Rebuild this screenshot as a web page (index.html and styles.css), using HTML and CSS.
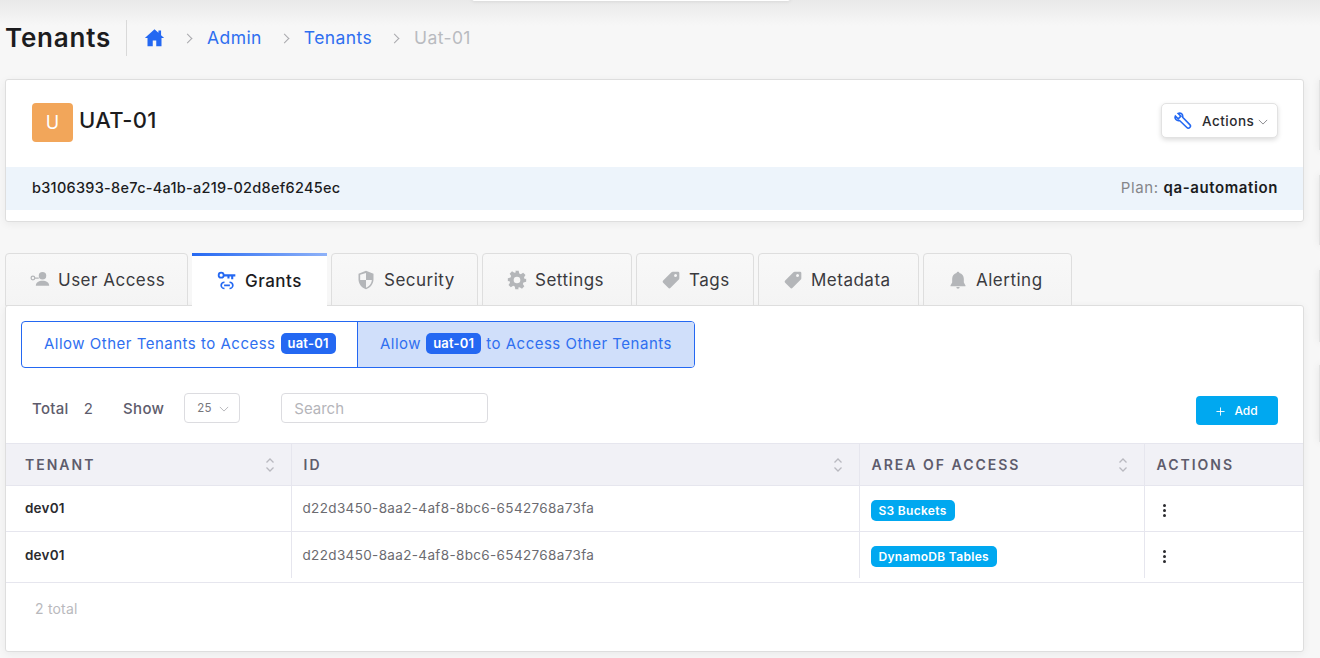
FILE: index.html
```html
<!DOCTYPE html>
<html lang="en">
<head>
<meta charset="UTF-8">
<title>Tenants</title>
<link rel="stylesheet" href="styles.css">
</head>
<body>
<div class="topnotch"></div>
<!-- edge of the panels that sit off screen -->
<div class="rail">
  <div class="rail-item r1"></div>
  <div class="rail-item r2"></div>
  <div class="rail-item r3"></div>
  <div class="rail-item r4"></div>
</div>
<header class="crumbbar">
  <h1 class="pagetitle">Tenants</h1>
  <nav class="crumbs">
    <svg class="homeicon" viewBox="0 0 24 24"><path d="M12 2.5 1 12.6h3V22h6v-6.5h4V22h6v-9.4h3L19.5 9.4V4h-3v2.7z"/></svg>
    <span class="sep"></span><a class="crumb">Admin</a>
    <span class="sep"></span><a class="crumb">Tenants</a>
    <span class="sep"></span><span class="crumb current">Uat-01</span>
  </nav>
</header>

<section class="card summary">
  <div class="summary-top">
    <div class="avatar">U</div>
    <h2 class="tenantname">UAT-01</h2>
    <button class="actionsbtn">
      <svg class="wrench" viewBox="0 0 24 24"><path d="M3 6.500 6.500 10 10 6.500 6.500 3C9.500 1.500 13 4 12.200 8l9 9.200a2.600 2.600 0 0 1-3.700 3.700L8.300 12C4.500 12.800 1.500 9.500 3 6.500z"/></svg>
      <span>Actions</span>
      <svg class="chev" viewBox="0 0 12 7"><path d="M1 1l5 5 5-5"/></svg>
    </button>
  </div>
  <div class="summary-info">
    <span class="uuid">b3106393-8e7c-4a1b-a219-02d8ef6245ec</span>
    <span class="plan">Plan: <b>qa-automation</b></span>
  </div>
</section>

<ul class="tabs">
  <li class="tab">
    <svg class="tabicon" viewBox="0 0 24 24"><circle cx="15" cy="7" r="4.500"/><path d="M7 19c0-4 3.500-6 8-6s8 2 8 6z"/><circle cx="3.500" cy="9.500" r="2.200" fill="none" stroke="#b4b6b9" stroke-width="1.500"/><path d="M5.500 9h5v1.500h-5z"/></svg>
    User Access</li>
  <li class="tab active">
    <svg class="tabicon" viewBox="0 0 24 24"><circle cx="5" cy="5" r="3" fill="none" stroke="#2468f2" stroke-width="2.200"/><path d="M8 4h14v2.500h-2.500V10h-2.500V6.500h-2V9h-2.500V6.500H8z"/><path d="M9 13.500a4 4 0 0 0-4 3.500 4 4 0 0 0 4 4M15 13.500a4 4 0 0 1 4 3.500 4 4 0 0 1-4 4M8.500 17.300h7" fill="none" stroke="#2468f2" stroke-width="2"/></svg>
    Grants</li>
  <li class="tab">
    <svg class="tabicon" viewBox="0 0 24 24"><path d="M12 1 3 4.500V11c0 5.500 3.800 10.300 9 12 5.200-1.700 9-6.500 9-12V4.500zM12 3.500V12H5V5.800zM12 12h7c-.3 4.300-3.300 7.900-7 9.300z" fill-rule="evenodd"/></svg>
    Security</li>
  <li class="tab">
    <svg class="tabicon" viewBox="0 0 24 24"><path fill-rule="evenodd" d="M10 1h4l.7 3.200 1.900.8 2.800-1.800 2.800 2.800-1.800 2.800.8 1.900L23 10.400v3.800l-3.200.7-.8 1.900 1.800 2.800-2.800 2.800-2.800-1.800-1.900.8L14 23h-4l-.7-3.200-1.900-.8-2.800 1.800-2.800-2.800 1.800-2.800-.8-1.900L1 13.600v-3.800l3.200-.7.8-1.900L3.200 4.400 6 1.600l2.800 1.800 1.900-.8zM12 8a4 4 0 1 0 0 8 4 4 0 0 0 0-8z"/></svg>
    Settings</li>
  <li class="tab">
    <svg class="tabicon" viewBox="0 0 24 24"><path fill-rule="evenodd" d="M14 2h6.500A1.500 1.500 0 0 1 22 3.500V10c0 .6-.2 1.100-.6 1.500L11.500 21.400a2 2 0 0 1-2.800 0L2.600 15.300a2 2 0 0 1 0-2.800L12.500 2.600c.4-.4.900-.6 1.500-.6zM17.500 4.800a1.800 1.800 0 1 0 0 3.600 1.800 1.800 0 0 0 0-3.600z"/></svg>
    Tags</li>
  <li class="tab">
    <svg class="tabicon" viewBox="0 0 24 24"><path fill-rule="evenodd" d="M14 2h6.500A1.500 1.500 0 0 1 22 3.500V10c0 .6-.2 1.100-.6 1.500L11.500 21.400a2 2 0 0 1-2.800 0L2.600 15.300a2 2 0 0 1 0-2.800L12.500 2.600c.4-.4.900-.6 1.500-.6zM17.500 4.800a1.800 1.800 0 1 0 0 3.600 1.800 1.800 0 0 0 0-3.600z"/></svg>
    Metadata</li>
  <li class="tab">
    <svg class="tabicon" viewBox="0 0 24 24"><path d="M12 2c1 0 1.700.7 1.700 1.600C16.800 4.400 19 7 19 10.500V15l2 3.500v1H3v-1L5 15v-4.500c0-3.500 2.200-6.100 5.300-6.900C10.300 2.700 11 2 12 2zM10 20.500h4a2 2 0 0 1-4 0z"/></svg>
    Alerting</li>
</ul>

<section class="card grants">
  <div class="toggle">
    <div class="toggle-item">Allow Other Tenants to Access <span class="pill">uat-01</span></div>
    <div class="toggle-item on">Allow <span class="pill">uat-01</span> to Access Other Tenants</div>
  </div>

  <div class="toolbar">
    <span class="lbl">Total</span><span class="count">2</span>
    <span class="lbl show">Show</span>
    <div class="pagesize">25 <svg class="chev" viewBox="0 0 12 7"><path d="M1 1l5 5 5-5"/></svg></div>
    <input class="search" placeholder="Search">
    <button class="addbtn"><svg class="plus" viewBox="0 0 10 10"><path d="M5 .5v9M.5 5h9"/></svg>Add</button>
  </div>

  <div class="gridwrap">
  <table class="grid">
    <thead>
      <tr>
        <th class="c1">TENANT<svg class="sort" viewBox="0 0 10 16"><path d="M1.500 5.500 5 2l3.500 3.500M1.500 10.500 5 14l3.500-3.500"/></svg></th>
        <th class="c2">ID<svg class="sort" viewBox="0 0 10 16"><path d="M1.500 5.500 5 2l3.500 3.500M1.500 10.500 5 14l3.500-3.500"/></svg></th>
        <th class="c3">AREA OF ACCESS<svg class="sort" viewBox="0 0 10 16"><path d="M1.500 5.500 5 2l3.500 3.500M1.500 10.500 5 14l3.500-3.500"/></svg></th>
        <th class="c4">ACTIONS</th>
      </tr>
    </thead>
    <tbody>
      <tr>
        <td class="name">dev01</td>
        <td class="gid">d22d3450-8aa2-4af8-8bc6-6542768a73fa</td>
        <td class="chipcell"><span class="area">S3 Buckets</span></td>
        <td class="chipcell"><span class="dots"><i></i><i></i><i></i></span></td>
      </tr>
      <tr class="last">
        <td class="name">dev01</td>
        <td class="gid">d22d3450-8aa2-4af8-8bc6-6542768a73fa</td>
        <td class="chipcell"><span class="area">DynamoDB Tables</span></td>
        <td class="chipcell"><span class="dots"><i></i><i></i><i></i></span></td>
      </tr>
    </tbody>
  </table>
  </div>
  <div class="tablefoot">2 total</div>
</section>
</body>
</html>
```
FILE: styles.css
```css
/*base*/
*{
  margin:0;
  padding:0;
  box-sizing:border-box;
  list-style:none;
}
html,body{
  height:658px;
  overflow:hidden;
}
body{
  background:#f7f7f7 linear-gradient(#e9e9e9,#f7f7f7 26px) no-repeat;
  padding:0 16px 0 5px;
  font-family:Inter,"Liberation Sans",sans-serif;
  color:#1c1c1e;
  position:relative;
}
.topnotch{
  position:absolute;
  top:-4px;
  left:472px;
  width:318px;
  height:5px;
  background:#fff;
  border-radius:4px;
  box-shadow:0 0 4px rgba(0,0,0,.12);
}
.rail-item{
  position:absolute;
  left:1319px;
  width:20px;
  background:#f4f4f4;
  border-left:1px solid #e2e2e2;
  box-shadow:0 0 8px rgba(0,0,0,.07);
}
.r1{top:80px;height:70px;}
.r2{top:175px;height:70px;}
.r3{top:270px;height:72px;}
.r4{top:365px;height:77px;}
/*header*/
.crumbbar{
  height:79px;
  display:flex;
  align-items:center;
  padding-bottom:4px;
}
.pagetitle{
  font-size:26px;
  font-weight:600;
  letter-spacing:.8px;
  padding-right:15px;
  border-right:1px solid #d9d9d9;
  line-height:36px;
}
.crumbs{
  display:flex;
  align-items:center;
  margin-left:17px;
  font-size:17.500px;
}
.homeicon{
  width:21px;
  height:21px;
  fill:#2468f2;
}
.sep{
  width:7px;
  height:7px;
  border-top:1.500px solid #a9a9ad;
  border-right:1.500px solid #a9a9ad;
  transform:rotate(45deg);
  margin:2px 16px 0 19px;
}
.crumb{
  color:#2f6ff0;
  letter-spacing:.4px;
}
.current{
  color:#b9bbc0;
}
/*cards*/
.card{
  background:#fff;
  border:1px solid #dedede;
  border-radius:3px;
  box-shadow:0 2px 8px rgba(0,0,0,.06);
}
.summary{
  height:143px;
}
.summary-top{
  height:87px;
  display:flex;
  align-items:flex-start;
  padding:23px 25px 0 26px;
}
.avatar{
  width:41px;
  height:39px;
  background:#f2a65a;
  border-radius:4px;
  color:#fff;
  font-size:18px;
  display:flex;
  align-items:center;
  justify-content:center;
}
.tenantname{
  font-size:22px;
  font-weight:500;
  letter-spacing:.3px;
  margin-left:6px;
  line-height:34px;
}
.actionsbtn{
  margin-left:auto;
  width:117px;
  height:35px;
  background:#fff;
  border:1px solid #e2e2e2;
  border-radius:5px;
  box-shadow:0 2px 5px rgba(0,0,0,.14);
  display:flex;
  align-items:center;
  padding-left:11px;
  font:500 13.500px Inter,"Liberation Sans",sans-serif;
  letter-spacing:.5px;
  color:#2b2b2f;
}
.wrench{
  width:19px;
  height:19px;
  fill:none;
  stroke:#2468f2;
  stroke-width:2;
  margin-right:10px;
}
.chev{
  width:10px;
  height:6px;
  fill:none;
  stroke:#8d8d92;
  stroke-width:1.200;
  margin-left:4px;
  margin-top:2px;
}
.summary-info{
  height:43px;
  background:#edf4fb;
  display:flex;
  align-items:center;
  justify-content:space-between;
  padding:0 25px 2px 26px;
  font-size:14.500px;
  font-weight:500;
  letter-spacing:.28px;
}
.plan{
  color:#85868a;
  font-size:15px;
  font-weight:400;
  letter-spacing:.6px;
}
.plan b{
  color:#1c1c1e;
  font-weight:600;
}
/*tabs*/
.tabs{
  display:grid;
  grid-template-columns:183px 135px 147px 150px 118px 161px 149px;
  gap:4px;
  margin-top:31px;
  position:relative;
  z-index:1;
  margin-bottom:-1px;
}
.tab{
  height:53px;
  display:flex;
  align-items:center;
  gap:8px;
  padding-left:24px;
  background:linear-gradient(#f8f8f8,#f4f4f4);
  border:1px solid #dedede;
  border-radius:4px 4px 0 0;
  font-size:17px;
  letter-spacing:.5px;
  color:#3a3a3e;
}
.tabicon{
  width:20px;
  height:20px;
  fill:#b4b6b9;
  flex:none;
}
.active{
  background:#fff;
  border:0;
  border-top:3px solid;
  border-image:linear-gradient(90deg,#2468f2,#8fb2f8) 1;
  padding-left:25px;
  font-weight:500;
  color:#1c1c1e;
}
.active .tabicon{
  fill:#2468f2;
}
/*grants*/
.grants{
  height:347px;
  padding-top:15px;
}
.toggle{
  display:flex;
  width:674px;
  height:47px;
  margin-left:15px;
  border:1px solid #2468f2;
  border-radius:4px;
  overflow:hidden;
  font-size:15px;
  letter-spacing:.5px;
  color:#2f6ff0;
}
.toggle-item{
  display:flex;
  align-items:center;
  gap:5px;
  padding:0 0 3px 22px;
  width:335px;
}
.on{
  flex:1;
  background:#d0dffa;
  border-left:1px solid #2468f2;
}
.pill{
  background:#2468f2;
  color:#fff;
  font-size:13px;
  font-weight:600;
  letter-spacing:.2px;
  padding:2px 7px 3px;
  border-radius:5px;
}
.toolbar{
  display:flex;
  align-items:center;
  height:50px;
  margin-top:15px;
  padding:0 25px 0 26px;
  font-size:15px;
  letter-spacing:.3px;
}
.lbl{
  font-weight:500;
  color:#5e5c6c;
}
.count{
  margin-left:15px;
  color:#5e5c6c;
}
.show{
  margin-left:30px;
}
.pagesize{
  margin-left:20px;
  width:56px;
  height:30px;
  border:1px solid #dcdce0;
  border-radius:4px;
  font-size:11.500px;
  color:#77777c;
  display:flex;
  align-items:center;
  padding-left:12px;
}
.pagesize .chev{
  margin-left:7px;
  stroke:#b9b9bd;
}
.search{
  margin-left:41px;
  width:207px;
  height:30px;
  border:1px solid #dcdce0;
  border-radius:4px;
  padding-left:12px;
  font:15px Inter,"Liberation Sans",sans-serif;
  outline:none;
}
.search::placeholder{
  color:#b5b5ba;
}
.addbtn{
  margin-left:auto;
  margin-top:4px;
  width:82px;
  height:29px;
  background:#00a8f0;
  color:#fff;
  border:0;
  border-radius:4px;
  font:500 12px Inter,"Liberation Sans",sans-serif;
  display:flex;
  align-items:center;
  justify-content:center;
  gap:9px;
}
.plus{
  width:9px;
  height:9px;
  fill:none;
  stroke:#fff;
  stroke-width:1;
  margin-top:2px;
}
/*table*/
.gridwrap{
  margin-top:10px;
  padding-bottom:4px;
  border-bottom:1px solid #e6e6ee;
}
.grid{
  width:100%;
  border-collapse:collapse;
  table-layout:fixed;
}
.grid th{
  position:relative;
  height:42px;
  background:#f1f1f6;
  border-top:1px solid #e6e6ee;
  border-bottom:1px solid #e6e6ee;
  border-right:1px solid #e6e6ee;
  text-align:left;
  padding-left:12px;
  font-size:14px;
  font-weight:600;
  letter-spacing:2px;
  color:#5e5c6c;
}
.grid th.c1{
  width:285px;
  padding-left:19px;
}
.grid th.c2{
  width:568px;
}
.grid th.c3{
  width:285px;
}
.grid th.c4{
  border-right:0;
}
.sort{
  position:absolute;
  right:16px;
  top:13px;
  width:10px;
  height:16px;
  fill:none;
  stroke:#b9b9c0;
  stroke-width:1.300;
}
.grid td{
  height:46px;
  border-bottom:1px solid #e6e6ee;
  border-right:1px solid #e6e6ee;
  padding:0 0 2px 11px;
  font-size:13.500px;
}
.grid .last td{
  border-bottom:0;
  padding-bottom:0;
}
.grid td.chipcell{
  padding-bottom:0;
}
.grid td:last-child{
  border-right:0;
}
.grid td.name{
  padding-left:19px;
  font-weight:600;
  letter-spacing:.2px;
  color:#2b2b2f;
}
.grid td.gid{
  color:#6b6b70;
  letter-spacing:.35px;
}
.area{
  display:inline-block;
  background:#00a8f0;
  color:#fff;
  font-size:12px;
  font-weight:600;
  letter-spacing:.3px;
  padding:3px 8px 3px;
  border-radius:5px;
  margin-top:4px;
}
.dots{
  display:flex;
  flex-direction:column;
  gap:2px;
  margin:4px 0 0 7px;
}
.dots i{
  width:3px;
  height:3px;
  border-radius:50%;
  background:#2b2b2f;
}
.tablefoot{
  padding:17px 0 0 29px;
  font-size:14px;
  letter-spacing:.2px;
  color:#b9b9bd;
}
```
